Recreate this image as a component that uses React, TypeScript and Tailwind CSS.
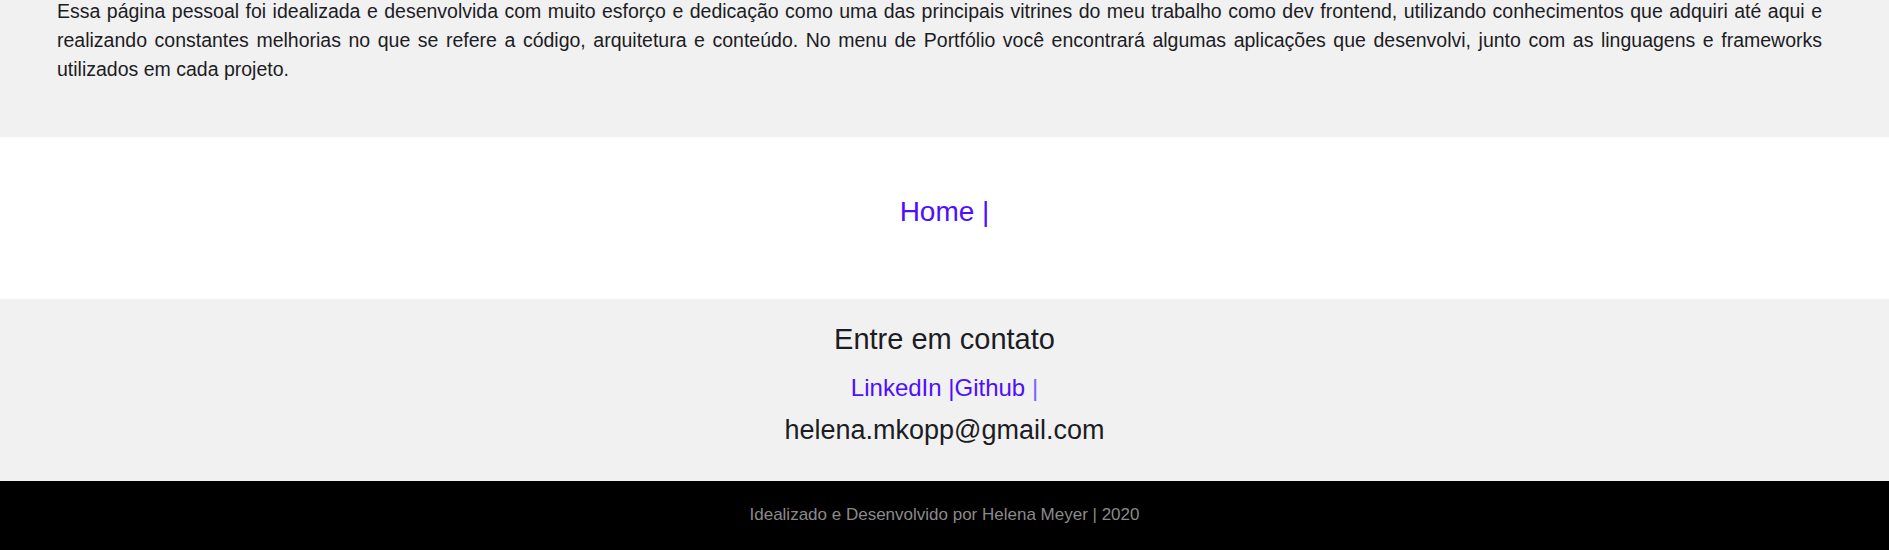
export default function App() {
  return (
    <div className="w-full font-['Liberation_Sans',Arial,sans-serif]">
      <section className="bg-[#f1f1f1] pb-[53px] pl-[57px] pr-[67px]">
        <p className="-mt-[3px] text-justify text-[19.5px] leading-[29px] text-[#1c1c24]">
          Essa página pessoal foi idealizada e desenvolvida com muito esforço e dedicação como uma das principais vitrines do meu trabalho como dev frontend, utilizando conhecimentos que adquiri até aqui e realizando constantes melhorias no que se refere a código, arquitetura e conteúdo. No menu de Portfólio você encontrará algumas aplicações que desenvolvi, junto com as linguagens e frameworks utilizados em cada projeto.
        </p>
      </section>

      <nav className="flex h-[162px] items-center justify-center bg-white pb-[13px]">
        <a href="#" className="text-[28px] leading-[32px] text-[#4d0fff]">
          Home |
        </a>
      </nav>

      <section className="flex h-[182px] flex-col items-center bg-[#f1f1f1] pt-[24px] text-[#1c1c24]">
        <h2 className="text-[29px] leading-[32px]">Entre em contato</h2>
        <div className="mt-[17px] text-[24px] leading-[32px] text-[#4d0fff]">
          <a href="#">LinkedIn |</a>
          <a href="#">Github </a>
          <span className="text-[#7d62ff]">|</span>
        </div>
        <p className="mt-[10px] text-[27px] leading-[32px]">helena.mkopp@gmail.com</p>
      </section>

      <footer className="flex h-[70px] justify-center bg-black pt-[22px]">
        <p className="text-[17px] leading-[24px] text-[#8a8a8a]">
          Idealizado e Desenvolvido por Helena Meyer | 2020
        </p>
      </footer>
    </div>
  );
}
